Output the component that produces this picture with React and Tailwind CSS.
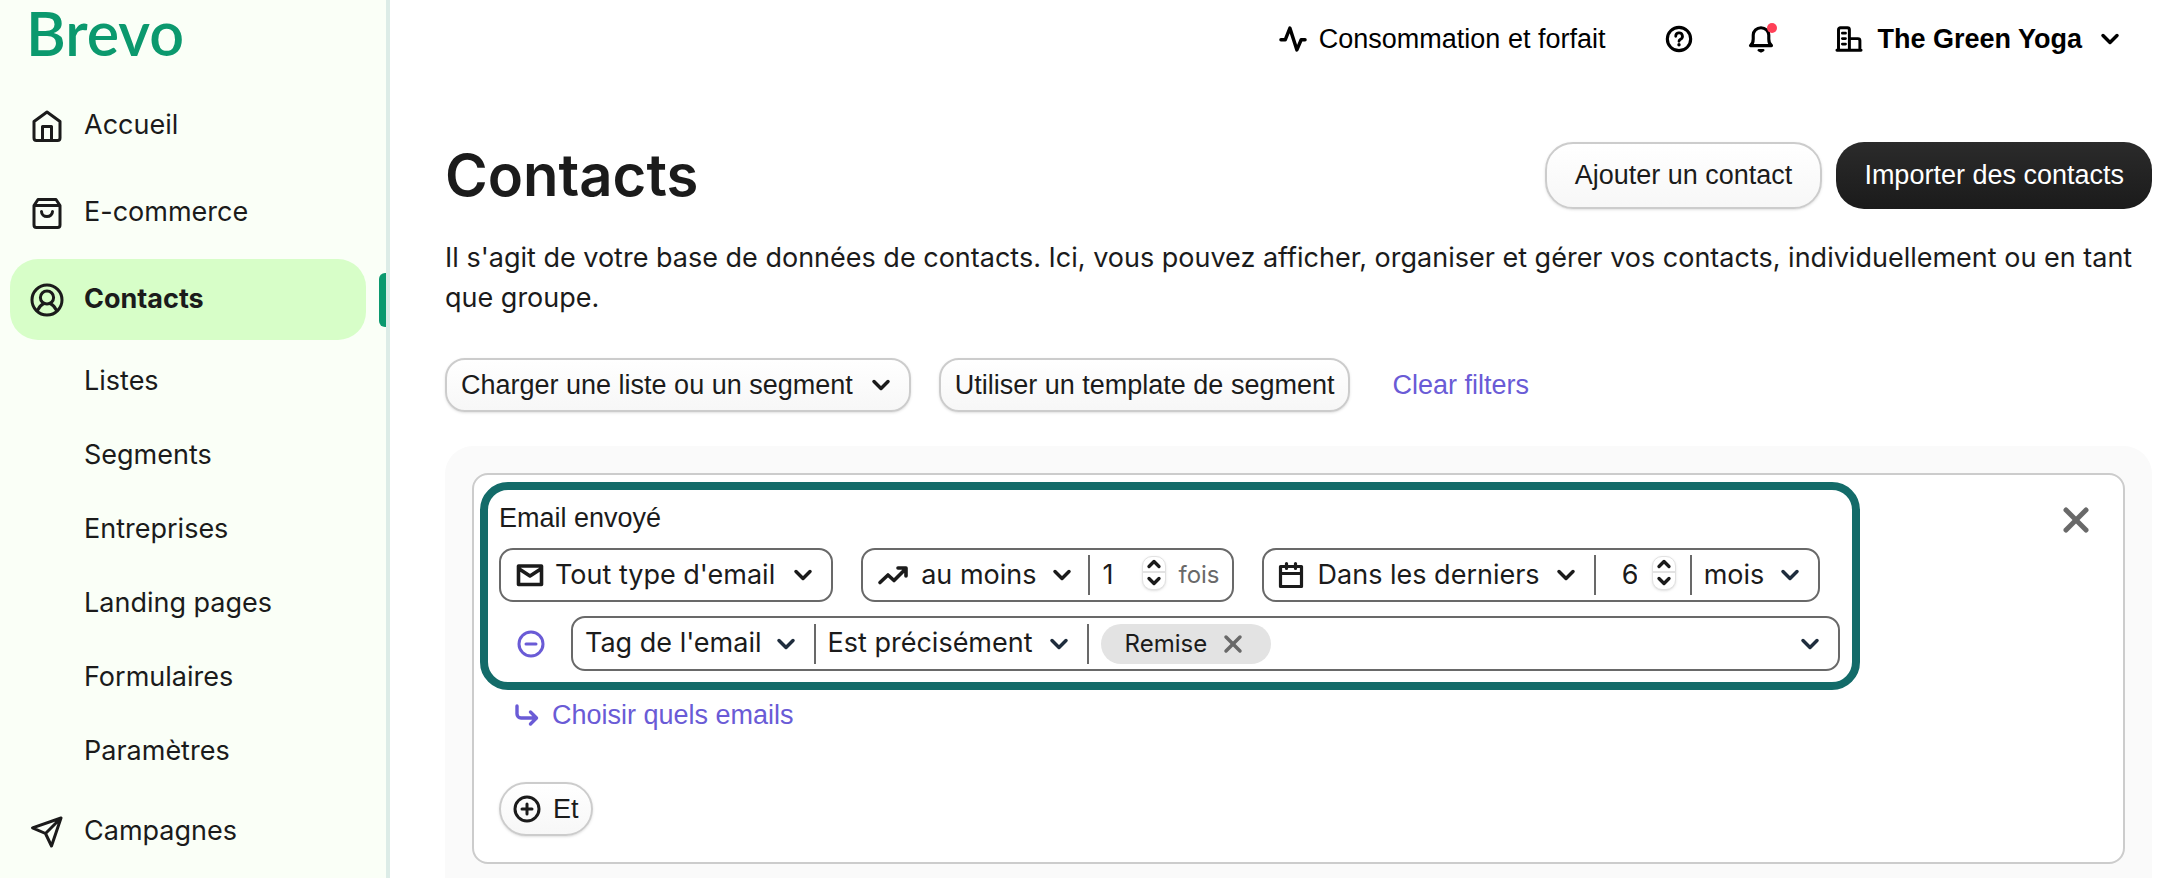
import React from 'react';
import { ChevronDown, ChevronUp, X } from 'lucide-react';

const NAV_TOP = [
    { label: 'Accueil', icon: 'home' },
    { label: 'E-commerce', icon: 'bag' },
    { label: 'Contacts', icon: 'user', active: true },
];

const NAV_CONTACTS = ['Listes', 'Segments', 'Entreprises', 'Landing pages', 'Formulaires', 'Paramètres'];

const Icon = ({ name, className }) => (
    <svg
        viewBox="0 0 36 36"
        fill="none"
        stroke="currentColor"
        strokeWidth="3"
        strokeLinecap="round"
        strokeLinejoin="round"
        className={className}
        aria-hidden="true"
    >
        {name === 'home' && (
            <>
                <path d="M5 13.500 18 4l13 9.500v16.500a2.400 2.400 0 0 1-2.400 2.400H7.400A2.400 2.400 0 0 1 5 30z" />
                <path d="M13.500 32V18.500h9V32" />
            </>
        )}
        {name === 'bag' && (
            <>
                <path d="M5 10.500 9 4.500h18l4 6v19.500a2.400 2.400 0 0 1-2.400 2.400H7.400A2.400 2.400 0 0 1 5 30zM5 10.500h26" />
                <path d="M12.500 16.500a5.500 5 0 0 0 11 0" />
            </>
        )}
        {name === 'user' && (
            <>
                <circle cx="18" cy="18" r="15" />
                <circle cx="18" cy="15.500" r="6.600" />
                <path d="M8.500 28.500c1.500-3.600 3.400-5.400 6.200-6.800M27.500 28.500c-1.500-3.600-3.400-5.400-6.200-6.800" />
            </>
        )}
        {name === 'send' && <path d="M32 4 3.500 13.800l13 5.700 6 12.500zM32 4 16.500 19.500" />}
        {name === 'pulse' && <path d="M2.500 19h5.500L14 4l9 28 5.500-13h5" strokeWidth="4.400" />}
        {name === 'help' && (
            <>
                <circle cx="18" cy="18" r="15" strokeWidth="4" />
                <path d="M13.800 14.500a4.300 4.300 0 1 1 6.200 3.800c-1.300.8-2 1.400-2 2.700" strokeWidth="3.600" />
                <circle cx="18" cy="25.500" r="1.200" fill="currentColor" strokeWidth="2" />
            </>
        )}
        {name === 'bell' && (
            <>
                <path d="M4.500 26.500h27c-2.500-1.800-3.500-4.500-3.500-8.500v-5a10 9.500 0 0 0-20 0v5c0 4-1 6.700-3.500 8.500z" strokeWidth="4" />
                <path d="M15 32.500h6l-3 1.500z" fill="currentColor" strokeWidth="3" />
            </>
        )}
        {name === 'building' && (
            <>
                <path d="M2.500 32.500h31M4.500 32V6a2.500 2.500 0 0 1 2.500-2.500h9A2.500 2.500 0 0 1 18.500 6v26M19 17.500h10.500A2.500 2.500 0 0 1 32 20v12" strokeWidth="3.800" />
                <path d="M9.500 10.500h4M9.500 17.500h4M9.500 24.500h4" strokeWidth="3.600" />
            </>
        )}
    </svg>
);

const Select = ({ label, value, className = '', chevron = 'text-[#1b1b1b]' }) => (
    <span className="flex items-center">
        <select
            aria-label={label}
            defaultValue={value}
            className={`appearance-none field-sizing-content bg-transparent outline-none cursor-pointer h-full ${className}`}
        >
            <option>{value}</option>
        </select>
        <ChevronDown className={`-ml-7 w-7 h-7 pointer-events-none ${chevron}`} strokeWidth={3} />
    </span>
);

const Stepper = ({ label }) => (
    <span className="flex flex-col w-6 h-[34px] mb-1 shrink-0 rounded-[10px] border border-[#e2e2e2] shadow-sm overflow-hidden bg-white">
        <button type="button" aria-label={`Augmenter ${label}`} className="h-4 flex items-center justify-center border-b-2 border-[#e2e2e2]">
            <ChevronUp className="w-5 h-5 shrink-0" strokeWidth={4} />
        </button>
        <button type="button" aria-label={`Diminuer ${label}`} className="h-4 flex items-center justify-center">
            <ChevronDown className="w-5 h-5 shrink-0" strokeWidth={4} />
        </button>
    </span>
);

const Divider = () => <span className="w-0.5 h-10 bg-[#696969]" />;

const Sidebar = () => (
    <aside className="w-[390px] shrink-0 bg-[#fafff7] border-r-4 border-[#dcece7]">
        <a href="#" className="block pl-[26px] h-[82px] font-['Lato'] font-semibold text-[61px] leading-[66px] text-[#0b996e]">
            Brevo
        </a>
        <nav className="text-[27px] text-[#1b1b1b]">
            {NAV_TOP.map(({ label, icon, active }) => (
                <div key={label} className="flex items-center justify-between py-[3px] pl-2.5">
                    <a
                        href="#"
                        className={`flex items-center w-[356px] h-[81px] gap-[19px] pl-[19px] rounded-[28px] ${active ? 'bg-[#d7fec8] font-bold' : ''}`}
                    >
                        <Icon name={icon} className="w-9 h-9" />
                        {label}
                    </a>
                    {active && <span className="w-[7px] h-[54px] rounded-l-md bg-[#0b996e]" />}
                </div>
            ))}
            <div className="pt-px">
                {NAV_CONTACTS.map((label) => (
                    <a key={label} href="#" className="flex items-center h-[74px] pl-[84px]">
                        {label}
                    </a>
                ))}
            </div>
            <div className="py-[3px] pl-2.5">
                <a href="#" className="flex items-center h-[81px] gap-[19px] pl-[19px]">
                    <Icon name="send" className="w-9 h-9" />
                    Campagnes
                </a>
            </div>
        </nav>
    </aside>
);

const TopBar = () => (
    <header className="flex items-center justify-end h-[78px] pr-12 text-[27px] text-black">
        <a href="#" className="flex items-center gap-3">
            <Icon name="pulse" className="w-7 h-7" />
            Consommation et forfait
        </a>
        <button type="button" aria-label="Aide" className="ml-[60px]">
            <Icon name="help" className="w-7 h-7" />
        </button>
        <button type="button" aria-label="Notifications" className="relative ml-[54px]">
            <Icon name="bell" className="w-7 h-7" />
            <span className="absolute -top-0.5 -right-0.5 w-2.5 h-2.5 rounded-full bg-[#ff4057]" />
        </button>
        <button type="button" className="flex items-center gap-3.5 ml-[60px] font-bold">
            <Icon name="building" className="w-7 h-7" />
            The Green Yoga
            <ChevronDown className="w-7 h-7" strokeWidth={3} />
        </button>
    </header>
);

const SegmentCard = () => (
    <section className="bg-white border-2 border-[#cccccc] rounded-2xl pt-[7px] pl-1.5 pb-[26px]">
        <div className="flex items-start justify-between">
            <div className="w-[84%] border-8 border-[#136b69] rounded-[28px] pt-2.5 pl-[11px] pr-3 pb-[11px]">
                <h2 className="text-[27px] leading-9 mb-3">Email envoyé</h2>
                <div className="flex items-center gap-7 mb-3.5 font-['Inter',sans-serif] text-[27px]">
                    <div className="flex items-center h-[54px] border-2 border-[#696969] rounded-[14px] pl-[15px] pr-3.5">
                        <svg viewBox="0 0 28 24" fill="none" stroke="currentColor" strokeWidth="3.600" strokeLinejoin="round" className="w-7 h-6 mr-[11px]">
                            <path d="M2.500 3h23v18.500h-23zM2.500 5.500 14 13l11.500-7.500" />
                        </svg>
                        <Select label="Type d'email" value="Tout type d'email" className="pr-[42px]" />
                    </div>
                    <div className="flex items-center h-[54px] border-2 border-[#696969] rounded-[14px] pl-3.5 pr-3">
                        <svg viewBox="0 0 32 24" fill="none" stroke="currentColor" strokeWidth="3.600" strokeLinecap="round" strokeLinejoin="round" className="w-8 h-6 mr-3">
                            <path d="M3 19.500 11 12l6 5.500L28.500 6M21 5h8v8" />
                        </svg>
                        <Select label="Fréquence" value="au moins" className="pr-10" />
                        <span className="w-3" />
                        <Divider />
                        <input type="number" aria-label="Nombre de fois" defaultValue="1" className="w-10 ml-3 outline-none [appearance:textfield]" />
                        <Stepper label="le nombre de fois" />
                        <span className="ml-3 text-[24px] text-[#696969]">fois</span>
                    </div>
                    <div className="flex items-center h-[54px] border-2 border-[#696969] rounded-[14px] pl-3.5 pr-3.5">
                        <svg viewBox="0 0 26 28" fill="none" stroke="currentColor" strokeWidth="3.200" strokeLinecap="round" strokeLinejoin="round" className="w-[26px] h-7 mr-3.5">
                            <path d="M2.500 5.500h21v20h-21zM2.500 12.500h21M8.500 2.500v5M17.500 2.500v5" />
                        </svg>
                        <Select label="Période" value="Dans les derniers" className="pr-10" />
                        <span className="w-3.5" />
                        <Divider />
                        <input type="number" aria-label="Durée" defaultValue="6" className="w-[30px] ml-[26px] outline-none [appearance:textfield]" />
                        <Stepper label="la durée" />
                        <span className="w-3.5" />
                        <Divider />
                        <Select label="Unité" value="mois" className="pl-3 pr-10" chevron="text-[#1f2d3d]" />
                    </div>
                </div>
                <div className="flex items-center font-['Inter',sans-serif] text-[27px]">
                    <button type="button" aria-label="Retirer la condition" className="w-[72px] pl-[18px]">
                        <svg viewBox="0 0 28 28" fill="none" stroke="#6a5bd6" strokeWidth="3" strokeLinecap="round" className="w-7 h-7">
                            <circle cx="14" cy="14" r="12" />
                            <path d="M9 14h10" />
                        </svg>
                    </button>
                    <div className="flex-1 flex items-center h-[55px] border-2 border-[#696969] rounded-[14px] pl-3 pr-3.5">
                        <Select label="Attribut" value="Tag de l'email" className="pr-[38px]" chevron="text-[#1f2d3d]" />
                        <span className="w-3.5" />
                        <Divider />
                        <Select label="Opérateur" value="Est précisément" className="pl-3 pr-10" chevron="text-[#1f2d3d]" />
                        <span className="w-3.5" />
                        <Divider />
                        <span className="flex items-center gap-3 h-10 ml-3 px-6 rounded-full bg-[#e3e3e3] text-[24px]">
                            Remise
                            <button type="button" aria-label="Retirer Remise" className="text-[#696969]">
                                <X className="w-7 h-7" strokeWidth={3} />
                            </button>
                        </span>
                        <input type="text" aria-label="Tags" className="flex-1 min-w-0 outline-none" />
                        <button type="button" aria-label="Ouvrir les tags" className="text-[#1f2d3d]">
                            <ChevronDown className="w-7 h-7" strokeWidth={3} />
                        </button>
                    </div>
                </div>
            </div>
            <button type="button" aria-label="Supprimer" className="mt-[18px] mr-[27px] text-[#696969]">
                <X className="w-10 h-10" strokeWidth={3} />
            </button>
        </div>
        <a href="#" className="flex items-center w-fit gap-[13px] mt-[7px] pl-[35px] text-[27px] leading-9 text-[#6a5bd6]">
            <svg viewBox="0 0 24 24" fill="none" stroke="currentColor" strokeWidth="3.400" strokeLinecap="round" strokeLinejoin="round" className="w-6 h-6">
                <path d="M2 3v8a4 4 0 0 0 4 4h15M15.500 9l6 6-6 6" />
            </svg>
            Choisir quels emails
        </a>
        <button
            type="button"
            className="flex items-center gap-3 h-[54px] mt-[49px] ml-[19px] pl-3 pr-3 border-2 border-[#cccccc] rounded-full bg-linear-to-b from-white to-[#f7f7f7] shadow-sm text-[27px]"
        >
            <svg viewBox="0 0 28 28" fill="none" stroke="currentColor" strokeWidth="3" strokeLinecap="round" className="w-7 h-7">
                <circle cx="14" cy="14" r="12" />
                <path d="M9 14h10M14 9v10" />
            </svg>
            Et
        </button>
    </section>
);

const App = () => (
    <div className="flex min-h-screen bg-white text-[#1b1b1b] font-['Liberation_Sans',sans-serif]">
        <div className="flex bg-[#fafff7] font-['Inter',sans-serif]">
            <Sidebar />
        </div>
        <div className="flex-1 min-w-0 flex flex-col">
            <TopBar />
            <main className="flex-1 flex flex-col pl-[55px] pr-5 pt-16">
                <div className="flex items-center gap-3.5">
                    <h1 className="flex-1 font-['Inter',sans-serif] font-semibold text-[58px] leading-[67px]">Contacts</h1>
                    <button type="button" className="h-[67px] px-7 border-2 border-[#cccccc] rounded-[28px] bg-linear-to-b from-white to-[#f7f7f7] shadow-sm text-[27px]">
                        Ajouter un contact
                    </button>
                    <button type="button" className="h-[67px] px-7 rounded-[28px] bg-linear-to-b from-[#2b2b2b] to-[#1b1b1b] text-white text-[27px]">
                        Importer des contacts
                    </button>
                </div>
                <p className="mt-[29px] font-['Inter',sans-serif] text-[27px] leading-10">
                    Il s'agit de votre base de données de contacts. Ici, vous pouvez afficher, organiser et gérer vos contacts, individuellement ou en tant que groupe.
                </p>
                <div className="flex items-center gap-7 mt-10 text-[27px]">
                    <button type="button" className="flex items-center gap-3.5 h-[54px] pl-3.5 pr-3.5 border-2 border-[#cccccc] rounded-[20px] bg-linear-to-b from-white to-[#f7f7f7] shadow-sm">
                        Charger une liste ou un segment
                        <ChevronDown className="w-7 h-7" strokeWidth={3} />
                    </button>
                    <button type="button" className="h-[54px] px-3.5 border-2 border-[#cccccc] rounded-[20px] bg-linear-to-b from-white to-[#f7f7f7] shadow-sm">
                        Utiliser un template de segment
                    </button>
                    <a href="#" className="ml-3.5 text-[#6a5bd6]">Clear filters</a>
                </div>
                <div className="flex-1 mt-[34px] px-[27px] pt-[27px] bg-[#fafafa] rounded-t-[28px]">
                    <SegmentCard />
                </div>
            </main>
        </div>
    </div>
);

export default App;
